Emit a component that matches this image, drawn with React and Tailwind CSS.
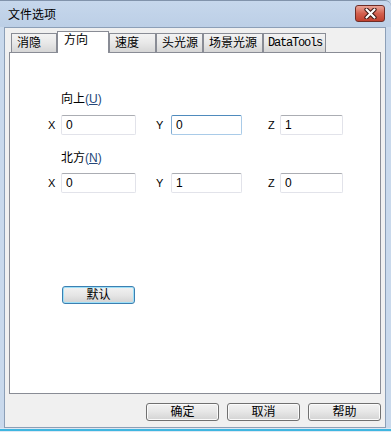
const ui = "font-[family-name:'Liberation_Sans','Noto_Sans_CJK_SC',sans-serif]"

const tabs = [
  { label: '消隐', w: 'w-[46px]' },
  { label: '方向', w: 'w-[52px]', active: true },
  { label: '速度', w: 'w-[47px]' },
  { label: '头光源', w: 'w-[47px]' },
  { label: '场景光源', w: 'w-[60px]' },
  { label: 'DataTools', w: 'w-[63px]', mono: true }
]

function Field({ value, w, focused }) {
  return (
    <div
      className={`${w} h-[20px] rounded-[2px] border bg-white flex items-center pl-[4px] text-[12px] leading-[14px] ${
        focused
          ? 'border-[#a9cbe8] border-t-[#4f8bbd] border-l-[#7fabd2]'
          : 'border-[#e2e3ea] border-t-[#abadb3]'
      }`}
    >
      {value}
    </div>
  )
}

function AxisRow({ values }) {
  return (
    <div className="flex items-center pl-[38px] text-[11px]">
      <span className="w-[13px]">X</span>
      <Field value={values[0]} w="w-[75px]" />
      <span className="ml-[20px] w-[15px]">Y</span>
      <Field value={values[1]} w="w-[71px]" focused={values.focused} />
      <span className="ml-[26px] w-[12px]">Z</span>
      <Field value={values[2]} w="w-[63px]" />
    </div>
  )
}

function Button({ children, primary, className = '' }) {
  return (
    <div
      className={`w-[73px] h-[18px] rounded-[3px] border flex items-center justify-center text-[12px] leading-[14px] bg-linear-to-b from-[#f2f2f2] via-[#e6e6e6] to-[#d3d3d3] ${
        primary
          ? 'border-[#3c7fb1] shadow-[inset_0_0_0_1px_#9ee0f8]'
          : 'border-[#707070] shadow-[inset_0_0_0_1px_#fbfbfb]'
      } ${className}`}
    >
      {children}
    </div>
  )
}

export default function App() {
  const up = ['0', '0', '1']
  up.focused = true
  const north = ['0', '1', '0']

  return (
    <div className={`${ui} w-[391px] h-[432px] bg-[#c9d9ec] flex flex-col overflow-hidden text-black`}>
      {/* 标题栏 */}
      <div className="h-[27px] shrink-0 flex items-start bg-linear-to-b from-[#c6d7ec] to-[#bccfe6] border-t border-[#8193ab] rounded-tr-[6px]">
        <span className="ml-[8px] mt-[7px] text-[12px] leading-[14px]">文件选项</span>
        <div className="ml-auto mr-[6px] mt-[4px] w-[30px] h-[17px] rounded-[3px] border border-[#6e2d27] bg-linear-to-b from-[#e9a396] via-[#d3604f] to-[#c0402e] flex items-center justify-center">
          <svg width="13" height="11" viewBox="0 0 13 11">
            <path d="M2.5 1.5 L10.5 9.5 M10.5 1.5 L2.5 9.5" stroke="#3b1410" strokeWidth="4.2" strokeLinecap="round" />
            <path d="M2.5 1.5 L10.5 9.5 M10.5 1.5 L2.5 9.5" stroke="#ffffff" strokeWidth="2.2" strokeLinecap="round" />
          </svg>
        </div>
      </div>

      {/* 客户区 */}
      <div className="flex-1 flex ml-[4px] mr-[5px]">
        <div className="flex-1 flex flex-col bg-[#f0f0f0] border border-[#8c9fb7] px-[4px]">
          {/* 标签页 */}
          <div className="mt-[3px] ml-[2px] h-[21px] flex items-end">
            {tabs.map(tab =>
              tab.active ? (
                <div
                  key={tab.label}
                  className={`${tab.w} h-[22px] -mb-[1px] relative z-10 bg-white border border-b-0 border-[#898c95] pl-[6px] pt-[1px] text-[12px] leading-[14px]`}
                >
                  {tab.label}
                </div>
              ) : (
                <div
                  key={tab.label}
                  className={`${tab.w} h-[19px] border border-b-0 border-[#898c95] bg-linear-to-b from-[#f3f3f3] via-[#e8e8e8] to-[#d6d6d6] pt-[2px] leading-[14px] ${
                    tab.mono
                      ? "font-[family-name:'Liberation_Mono',monospace] text-[12px] tracking-[-1.2px] pl-[4px]"
                      : 'text-[12px] pl-[5px]'
                  }`}
                >
                  {tab.label}
                </div>
              )
            )}
          </div>

          {/* 面板 */}
          <div className="h-[342px] bg-white border border-[#898c95] flex flex-col">
            <div className="mt-[39px] pl-[51px] text-[12px] leading-[14px]">
              向上<span className="text-[#24487a]">(<span className="underline">U</span>)</span>
            </div>
            <div className="mt-[9px]">
              <AxisRow values={up} />
            </div>
            <div className="mt-[16px] pl-[51px] text-[12px] leading-[14px]">
              北方<span className="text-[#24487a]">(<span className="underline">N</span>)</span>
            </div>
            <div className="mt-[8px]">
              <AxisRow values={north} />
            </div>
            <Button primary className="mt-[93px] ml-[52px]">默认</Button>
          </div>

          {/* 底部按钮 */}
          <div className="mt-[9px] flex justify-end gap-[8px]">
            <Button>确定</Button>
            <Button>取消</Button>
            <Button>帮助</Button>
          </div>
        </div>
      </div>

      {/* 底边 */}
      <div className="h-[4px] shrink-0 flex flex-col">
        <div className="h-[1px] bg-[#dfe8f3]" />
        <div className="h-[2px] bg-[#3fb6e0]" />
        <div className="h-[1px] bg-[#dfe8f3]" />
      </div>
    </div>
  )
}
